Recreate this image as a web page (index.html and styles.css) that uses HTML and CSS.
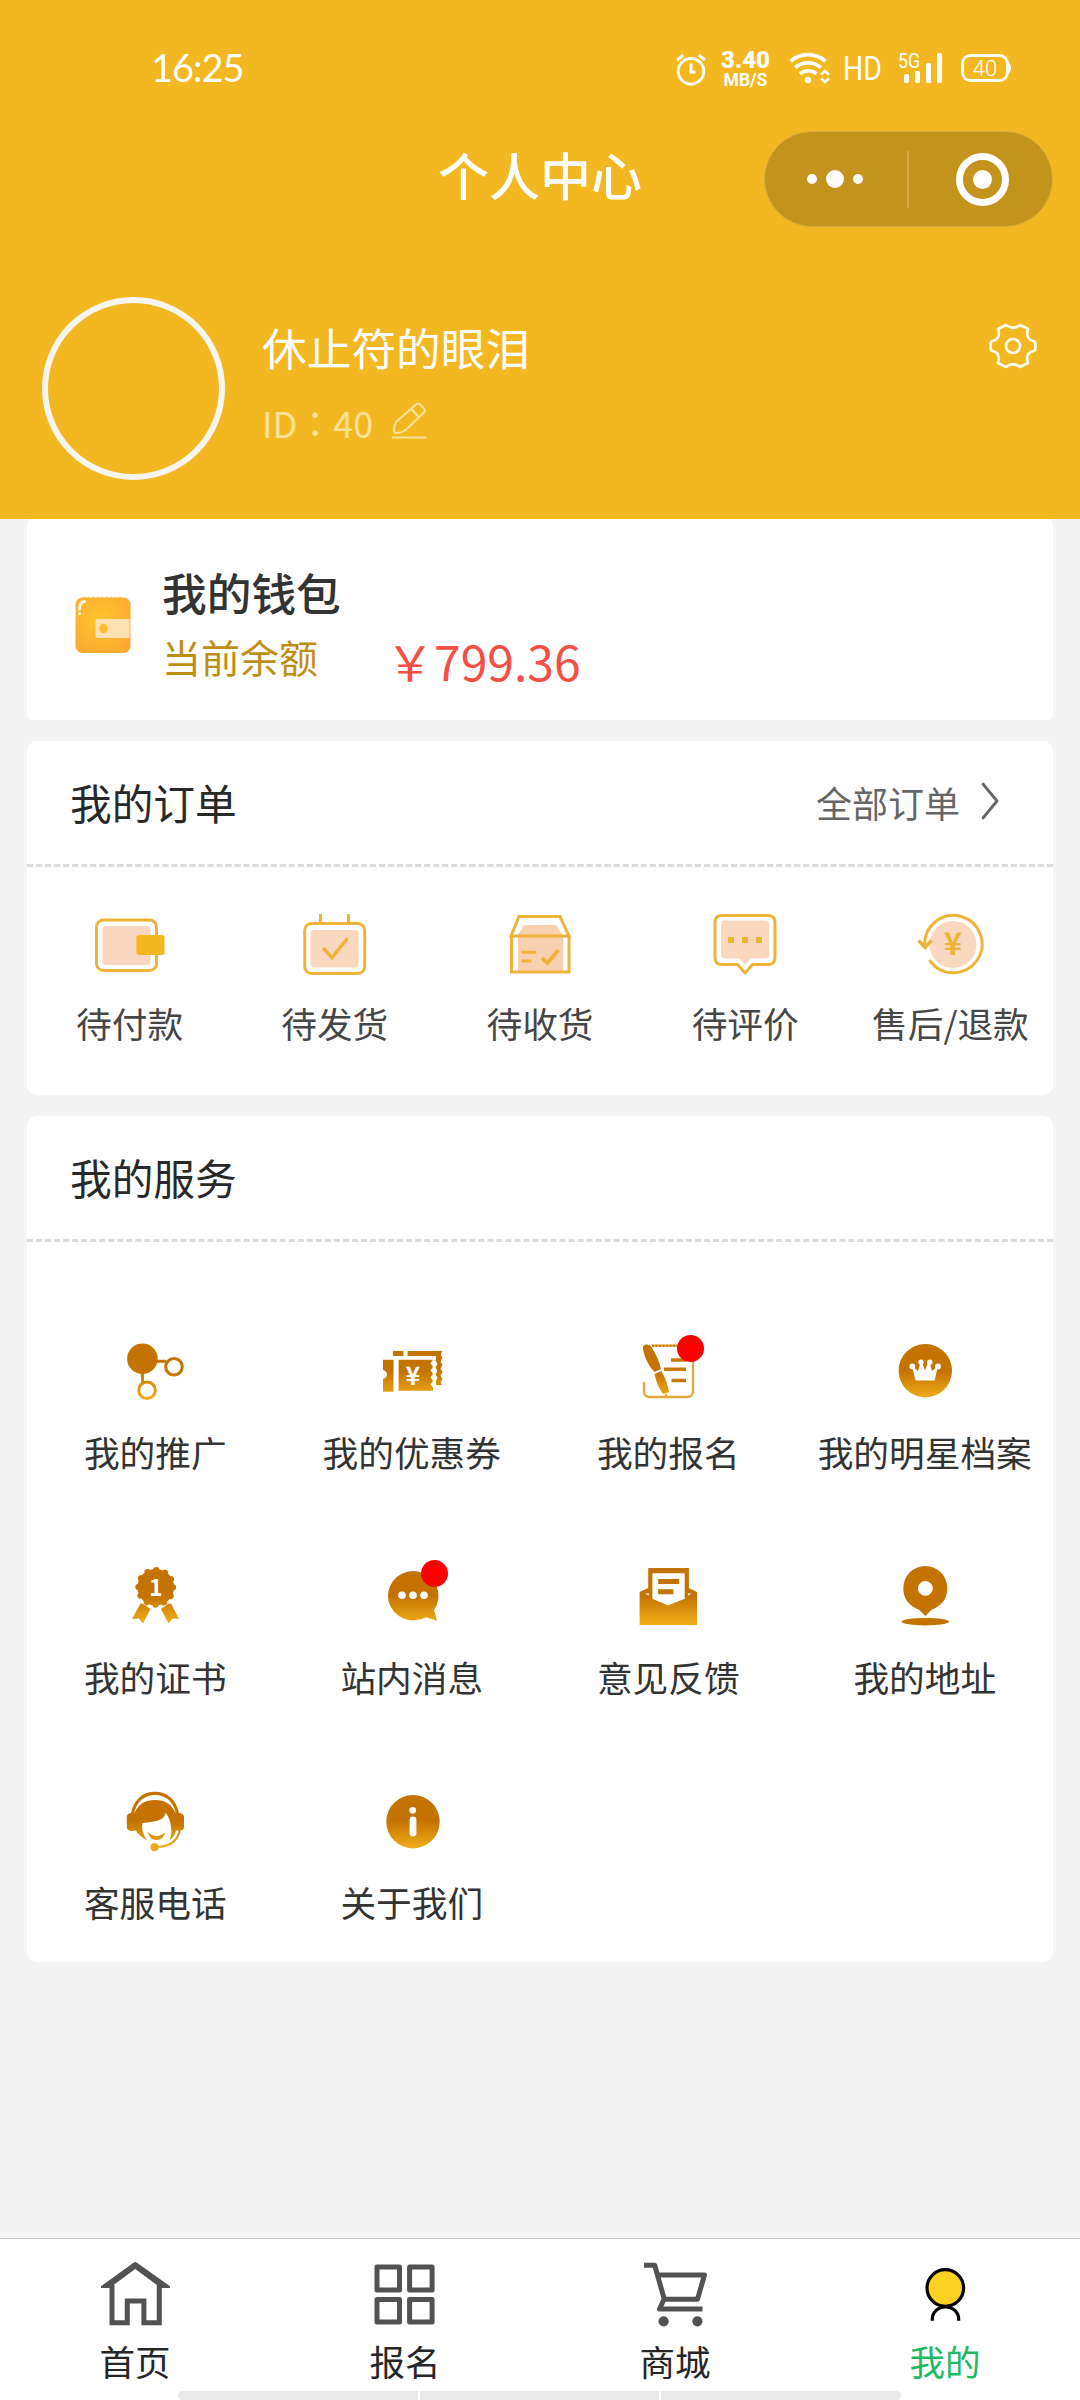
FILE: index.html
```html
<!DOCTYPE html>
<html lang="zh-CN">
<head>
<meta charset="utf-8">
<title>个人中心</title>
<link rel="stylesheet" href="styles.css">
</head>
<body>
<svg class="defs" width="0" height="0" aria-hidden="true">
  <defs>
    <linearGradient id="gold" gradientUnits="userSpaceOnUse" x1="0" y1="10" x2="0" y2="70">
      <stop offset="0" stop-color="#c57300"/>
      <stop offset=".52" stop-color="#c57300"/>
      <stop offset=".95" stop-color="#eeaa18"/>
    </linearGradient>
    <radialGradient id="purse" cx=".45" cy=".4" r=".7">
      <stop offset="0" stop-color="#fec62c"/>
      <stop offset="1" stop-color="#fda832"/>
    </radialGradient>
  </defs>
</svg>
<div class="page">
  <header class="hero">
    <div class="status">
      <time class="clock">16:25</time>
      <div class="indicators">
        <svg class="alarm" viewBox="0 0 30 44" fill="none" stroke="#fff"><circle cx="15" cy="25.3" r="12.8" stroke-width="2.8"/><path d="M15 17.5V26h4.5" stroke-width="3"/><path d="M1.2 14 7.3 9M28.8 14 22.700 9" stroke-width="3"/></svg>
        <div class="speed"><b>3.40</b><small>MB/S</small></div>
        <svg class="wifi" viewBox="0 0 42 44" fill="none" stroke="#fff" stroke-width="3.8"><path d="M2.500 15.200C13 6.500 27 6.500 37.500 15.200M7 21.600C14.500 15.200 25.500 15.200 33 21.600M12 27.800c5-4 11.500-4 16.500 0"/><circle cx="20" cy="34" r="3.200" fill="#fff" stroke="none"/><path d="m33 28.500 4-3.500 4 3.500M33 32.500l4 3.500 4-3.500" stroke-width="2.800"/></svg>
        <svg class="hd" viewBox="0 0 44 44"><text x="2" y="34" textLength="39" lengthAdjust="spacingAndGlyphs">HD</text></svg>
        <svg class="signal" viewBox="0 0 45 44" fill="#fff"><text x="0" y="22" textLength="22" lengthAdjust="spacingAndGlyphs">5G</text><rect x="6" y="28" width="5" height="9" rx="1.500"/><rect x="17" y="25" width="5" height="12" rx="1.500"/><rect x="28" y="17" width="5" height="20" rx="1.500"/><rect x="39" y="7" width="5" height="30" rx="1.500"/></svg>
        <svg class="battery" viewBox="0 0 52 44"><rect x="2.500" y="9.500" width="45" height="25" rx="8" fill="none" stroke="#fff" stroke-width="2.800"/><path d="M48 16q3 2 3 6t-3 6z" fill="#fff"/><text x="25" y="29.500" text-anchor="middle">40</text></svg>
      </div>
    </div>
    <div class="navbar">
      <h1>个人中心</h1>
      <div class="capsule">
        <span class="more"><i></i><i></i><i></i></span>
        <span class="close"><i></i></span>
      </div>
    </div>
    <div class="profile">
      <div class="avatar"></div>
      <div class="who">
        <div class="name">休止符的眼泪</div>
        <div class="uid"><span lang="zh-TW">ID：40</span>
          <svg viewBox="0 0 36 38" fill="none" stroke="currentColor" stroke-width="2" stroke-linecap="round" stroke-linejoin="round"><path d="M5 32q-2 0-2-3 0-5 2-8L25 3.500q2-2 4 0l4 4q1.500 2 0 4L14 29.500Q10 32 5 32zM20.500 8l7.500 8.500M1.500 36.500h33"/></svg>
        </div>
      </div>
      <svg class="gear" viewBox="-24 -24 48 48" fill="none" stroke="#fffdf0" stroke-width="2.700" stroke-linejoin="round"><circle r="7"/><path d="M-7-21Q0-15.500 7-21L15-17Q12-7 20.500-5Q22.300-4.500 22.300-2.500V2.500Q22.300 4.500 20.500 5Q12 7 15 17L7 21Q0 15.500-7 21L-15 17Q-12 7-20.500 5Q-22.300 4.500-22.300 2.500V-2.500Q-22.300-4.500-20.500-5Q-12-7-15-17Z"/></svg>
    </div>
  </header>

  <main>
    <section class="card wallet">
      <svg viewBox="0 0 56 58"><rect x=".5" y="1.500" width="55" height="55.500" rx="7" fill="url(#purse)"/><path d="M8 1.500h40" stroke="#fdc05c" stroke-width="1.500" stroke-dasharray="2 2.500"/><path d="M22 23h32.500v19H22q-1.500 0-1.500-2V25q0-2 1.500-2z" fill="#fee1b3"/><ellipse cx="28.500" cy="32.500" rx="4.200" ry="4.700" fill="#fdbb2e"/><path d="M4.500 13q0-7 5-7.500" fill="none" stroke="#fff6dc" stroke-width="3" stroke-linecap="round"/><circle cx="4.500" cy="17.500" r="1.500" fill="#fff6dc"/></svg>
      <div>
        <h2>我的钱包</h2>
        <p><span class="label">当前余额</span><span class="amount">￥799.36</span></p>
      </div>
    </section>

    <section class="card orders">
      <div class="head"><h3>我的订单</h3><a>全部订单<svg viewBox="0 0 20 40" fill="none" stroke="#666" stroke-width="2.800" stroke-linecap="round" stroke-linejoin="round"><path d="m3 3 14 17L3 37"/></svg></a></div>
      <div class="states">
        <div class="state"><svg viewBox="0 0 80 64" fill="none" stroke="#eeb43a" stroke-width="3"><rect x="6.500" y="7" width="60" height="50.500" rx="7"/><rect x="12.500" y="13" width="48" height="39" rx="4" fill="#fad7bf" stroke="none"/><rect x="46.500" y="22" width="28" height="20" rx="2.500" fill="#f3b721" stroke="none"/></svg><span>待付款</span></div>
        <div class="state"><svg viewBox="0 0 80 64" fill="none" stroke="#eeb43a" stroke-width="3"><path d="M25.500 1v11M53.500 1v11"/><rect x="9.700" y="10.500" width="60" height="50" rx="7"/><rect x="15.500" y="17" width="48" height="37.500" rx="4" fill="#fad7bf" stroke="none"/><path d="m29 36 8 8.500 14.500-18" stroke-width="3.500" stroke-linecap="round"/></svg><span>待发货</span></div>
        <div class="state"><svg viewBox="0 0 80 64" fill="none" stroke="#eeb43a" stroke-width="3"><path d="M24 12h32l7 11.500V60H17V23z" fill="#f9d1b1" stroke="none"/><path d="M16.500 25v33M64.500 25v33" stroke="#fff"/><path d="M19 3.500h41l9 19.500H11zM11.500 23h57.500v36H11.500z"/><path d="M21.500 39.200h14.500M21.500 48h10"/><path d="m42 45 5.500 5L58.500 37" stroke-width="4"/></svg><span>待收货</span></div>
        <div class="state"><svg viewBox="0 0 80 64" fill="none" stroke="#eeb43a" stroke-width="3"><path d="M17 2.500h46q7 0 7 7v35q0 7-7 7H47.500l-7.500 8.500L32.500 51.500H17q-7 0-7-7v-35q0-7 7-7z" stroke-linejoin="round"/><path d="M20 7.500h40q4 0 4 4v31q0 3-4 3H46l-6 6-6-6H20q-4 0-4-3v-31q0-4 4-4z" fill="#fad7bf" stroke="none"/><path d="M23 27h6M37 27h6M51 27h6" stroke-width="6"/></svg><span>待评价</span></div>
        <div class="state"><svg viewBox="0 0 80 64" fill="none" stroke="#eeb43a" stroke-width="3"><circle cx="43" cy="31.500" r="23.500" fill="#fad7bf" stroke="none"/><path d="M19.500 47A28.700 28.700 0 1 0 14.800 33.500"/><path d="m8.500 27.500 6.500 7 6.500-7" stroke-width="3.500"/><text x="43" y="42" text-anchor="middle">¥</text></svg><span>售后/退款</span></div>
      </div>
    </section>

    <section class="card services">
      <div class="head"><h3>我的服务</h3></div>
      <div class="grid">
        <div class="item"><div class="ico"><svg viewBox="0 0 80 80"><circle cx="27.400" cy="28.700" r="15.300" fill="url(#gold)"/><g fill="none" stroke="url(#gold)" stroke-width="3"><circle cx="59" cy="36.700" r="8.300"/><circle cx="32" cy="60.300" r="8.300"/><path d="M41 31.200l10 .1M27.400 42l.1 12"/></g></svg></div><span>我的推广</span></div>
        <div class="item"><div class="ico"><svg viewBox="0 0 80 80" fill="url(#gold)"><path d="M11 29.700h10.500v32H11V49q4-1 4-4.500T11 40zM26.600 29.700H61l-2.500 3.500 2.500 3.500-2.500 3.500 2.500 3.500-2.500 3.500 2.500 3.500-2.500 3.500 2.500 3.500v3H26.600zM20.900 21h10.600v5H20.900zM35.600 21h34.900l-2 3.500 2 3.500-2 3.500 2 3.500-2 3.500 2 3.500-2 3.500 2 3.500-2 3.500 1.800 2.500H64v-4l1.500-3-2-3.500 2-3.500-2-3.500 2-3.500-2-3.500.5-2.500V26H35.600z"/><text x="41" y="54.500" text-anchor="middle" class="yen">¥</text></svg></div><span>我的优惠券</span></div>
        <div class="item"><div class="ico"><svg viewBox="0 0 80 80"><path d="M24 15.700h35q6 0 6 6V61q0 6-6 6H22q-6 0-6-6v-9" fill="none" stroke="#e5a83c" stroke-width="2.300"/><path d="M24 15.700h35" stroke="#c57300" stroke-width="2" stroke-dasharray="2 1.500"/><path d="M15 19q-.5-4 3-4.500 4-.5 5.500 2.500 7 11 9.500 22l-6.500 3Q17 32 15 19zM26.500 44l7-3q6 11 7.500 21l-2 1-4 1Q29 56 26.500 44zM36 65l3-1v3z" fill="url(#gold)"/><path d="M43 30h15M36 39.200h22M43.500 50.500h14.500" stroke="#c67808" stroke-width="3.600"/></svg><i class="dot"></i></div><span>我的报名</span></div>
        <div class="item"><div class="ico"><svg viewBox="0 0 80 80"><circle cx="40.300" cy="40.700" r="26.700" fill="url(#gold)"/><g fill="#fff"><path d="m27 36 6 5 2.500-8.500h1.500l3 8 3-8h1.500L47 41l6-5-3.500 14.500h-19z"/><circle cx="27.300" cy="36.500" r="2.900"/><circle cx="36" cy="32.300" r="2.700"/><circle cx="44.800" cy="32.300" r="2.700"/><circle cx="53" cy="36.500" r="2.900"/></g></svg></div><span>我的明星档案</span></div>
        <div class="item"><div class="ico"><svg viewBox="0 0 80 80" fill="url(#gold)"><circle cx="40.700" cy="32.300" r="18.300"/><circle cx="40.700" cy="32.300" r="17.500" fill="none" stroke="url(#gold)" stroke-width="5.800" stroke-dasharray=".1 9.063" stroke-linecap="round"/><path d="m25.500 48.500 3 .5 7 5-7.500 14.500-4-5-7 .5zM56 48.500l-3 .5-7 5L53.500 68.500l4-5 6.500.5z"/><text x="40.700" y="40.500" text-anchor="middle" class="one">1</text></svg></div><span>我的证书</span></div>
        <div class="item"><div class="ico"><svg viewBox="0 0 80 80" fill="url(#gold)"><path d="M41 16a25.500 24.700 0 0 1 25.500 24.700q0 8-4.500 14l3 11-11-3.500A25.500 24.700 0 1 1 41 16z"/><g fill="#fff"><circle cx="30" cy="40.300" r="3.800"/><circle cx="41" cy="40.300" r="3.800"/><circle cx="52" cy="40.300" r="3.800"/></g></svg><i class="dot"></i></div><span>站内消息</span></div>
        <div class="item"><div class="ico"><svg viewBox="0 0 80 80" fill="url(#gold)"><path d="M20.200 13h40.700v20l8.100 4v33H11.600V37l8.600-4z"/><path d="M24.400 18.300h32.300v25.500L40 50.500l-15.600-6.700zM17 38.500h4v2zM60 38.500h4l-4 2z" fill="#fff"/><path d="M30.200 24h21v5h-21zM30.200 34.200h15.200v5H30.200z"/></svg></div><span>意见反馈</span></div>
        <div class="item"><div class="ico"><svg viewBox="0 0 80 80" fill="#c57300"><path fill-rule="evenodd" d="M40.300 11a22 22 0 0 1 22 22.500q0 15-16 21.500l-6 6-6-6q-16-6.500-16-21.500a22 22 0 0 1 22-22.500zm0 15a7.400 7.400 0 1 0 .1 0z"/><ellipse cx="40.300" cy="66.700" rx="23.800" ry="3.700"/></svg></div><span>我的地址</span></div>
        <div class="item"><div class="ico"><svg viewBox="0 0 80 80" fill="url(#gold)"><path d="M17.500 34C20 20 29 13.300 40 13.300S60 20 62.500 34" fill="none" stroke="url(#gold)" stroke-width="3.200"/><path d="M19.500 33Q25 20 40 20t20.500 13h4.500q4 1 4 4v10q0 4-5 3.500L61 50.500q-1 6-7 10 3.500-6 2-13.500-.5-8-5.500-14.500-.5 5-6 7.500-6 2-17 3-2 8 4.500 17.500Q23 55 21 50.500l-4 .5q-5 0-5.200-4V37q0-3.500 4-4z"/><path d="M35 55q6 4 13 0-2 4-6.500 4T35 55zM65 49Q62 67 41 67" fill="none" stroke="url(#gold)" stroke-width="2"/><circle cx="39.500" cy="67.300" r="4"/></svg></div><span>客服电话</span></div>
        <div class="item"><div class="ico"><svg viewBox="0 0 80 80"><circle cx="41" cy="41.700" r="26.700" fill="url(#gold)"/><circle cx="40.700" cy="30.300" r="3.400" fill="#fff"/><path d="M41 40v13" stroke="#fff" stroke-width="6.800" stroke-linecap="round"/></svg></div><span>关于我们</span></div>
      </div>
    </section>
  </main>

  <nav class="tabs">
    <div class="tab"><svg viewBox="0 0 80 80" fill="none" stroke="#525252" stroke-width="5"><path d="M17 31v37.800h15.300V46.900h16.600v21.900h15.400V31"/><path d="M6 32.300 38.600 8.700q1.700-1.200 3.400 0L75 32.300V34h-9L40.200 15 14.500 34H6z" fill="#525252" stroke="none"/></svg><span>首页</span></div>
    <div class="tab"><svg viewBox="0 0 80 80" fill="none" stroke="#525252" stroke-width="5"><path d="M12 12.900h22.500v23H12zM44.600 12.900h22.500v23H44.600zM12 45.500h22.500V68H12zM44.600 45.500h22.500V68H44.600z" stroke-linejoin="round"/></svg><span>报名</span></div>
    <div class="tab"><svg viewBox="0 0 80 80" fill="none" stroke="#525252" stroke-width="5"><path d="M9 11.300h10.700L29.500 46M23 21h46.500L62.500 45.300H29L24.500 55h43" stroke-linejoin="round"/><g fill="#525252" stroke="none"><circle cx="28.600" cy="67.300" r="5.100"/><circle cx="62.400" cy="67.300" r="5.100"/></g></svg><span>商城</span></div>
    <div class="tab active"><svg viewBox="0 0 80 80" fill="none" stroke="#000" stroke-width="3.200"><circle cx="40.300" cy="34" r="18.300" fill="#fdd022"/><path d="M27.300 66.700V65a13.200 12.200 0 0 1 26.400 0v1.700"/></svg><span>我的</span></div>
    <div class="handle"><i></i><i></i><i></i></div>
  </nav>
</div>
</body>
</html>
```
FILE: styles.css
```css
* { box-sizing: border-box; }
body, h1, h2, h3, p { margin: 0; }
body { font-family: "Noto Sans CJK SC", sans-serif; font-weight: 400; color: #333; background: #f4f4f4; }
h1, h2, h3 { font-weight: inherit; }
i { font-style: normal; }
svg { display: block; flex: none; }
.defs { position: absolute; }
.page { width: 1080px; height: 2400px; display: flex; flex-direction: column; overflow: hidden; }

/* header */
.hero { height: 519px; background: #f3b721; color: #fff; flex: none; }
.status { height: 131px; padding: 46px 68px 0 151px; display: flex; justify-content: space-between; align-items: flex-start; }
.clock { font: 38px/43px Lato, sans-serif; letter-spacing: -1px; }
.indicators { display: flex; height: 44px; }
.indicators svg { height: 44px; }
.indicators text { fill: #fff; font-family: Roboto, sans-serif; }
.alarm { width: 30px; }
.speed { width: 49px; margin-left: 15px; display: flex; flex-direction: column; align-items: center; font-family: Roboto, sans-serif; font-weight: 700; white-space: nowrap; padding-top: 3px; }
.speed b { font-size: 24px; line-height: 22px; }
.speed small { font-size: 17.500px; line-height: 18px; }
.wifi { width: 42px; margin-left: 18px; }
.hd { width: 44px; margin-left: 11px; }
.hd text { font-size: 33px; }
.signal { width: 45px; margin-left: 13px; }
.signal text { font-size: 20px; }
.battery { width: 52px; margin-left: 17px; }
.battery text { font-size: 22px; font-weight: 300; }

.navbar { height: 96px; padding-right: 27px; display: grid; grid-template-columns: 438px 1fr 289px; }
.navbar h1 { grid-column: 2; font-size: 51px; font-weight: 500; line-height: 86px; }
.capsule { height: 96px; border-radius: 48px; background: #c3931b; border: 1.500px solid #d8ab42; display: grid; grid-template-columns: 1fr 1fr; align-items: center; }
.more { height: 57px; padding-right: 2px; border-right: 2px solid #d3a847; display: flex; align-items: center; justify-content: center; gap: 9px; }
.more i { width: 10px; height: 10px; border-radius: 50%; background: #fff; }
.more i:nth-child(2) { width: 18px; height: 18px; }
.close { width: 53px; height: 53px; margin-left: 47px; border: 7px solid #fff; border-radius: 50%; display: grid; place-items: center; }
.close i { width: 19px; height: 19px; border-radius: 50%; background: #fff; }

.profile { padding: 70px 43px 0 42px; display: flex; align-items: flex-start; }
.avatar { width: 183px; height: 183px; border: 6px solid #f7f5f0; border-radius: 50%; }
.who { margin-left: 37px; padding-top: 20px; flex: 1; }
.name { font-size: 44.700px; line-height: 60px; }
.uid { margin-top: 15px; display: flex; align-items: center; color: #fbe19a; font-size: 36px; line-height: 60px; }
.uid span { font-family: "Noto Sans CJK TC", sans-serif; }
.uid svg { width: 36px; height: 38px; margin: -5px 0 0 18px; }
.gear { width: 48px; height: 48px; margin-top: 25px; }

/* cards */
main { flex: 1; padding: 0 27px; }
.card { background: #fff; border-radius: 10px; }
.wallet { height: 201px; border-radius: 6px; padding: 43px 0 0 48px; display: flex; }
.wallet svg { width: 56px; height: 58px; margin: 34px 31px 0 0; }
.wallet h2 { font-size: 44.700px; font-weight: 500; line-height: 60px; }
.wallet p { display: flex; }
.label { color: #bf8e16; font-size: 39px; line-height: 68px; width: 224px; }
.amount { color: #f54f45; font-size: 48px; line-height: 77px; }
.orders { height: 354px; margin-top: 21px; }
.head { height: 126px; padding: 0 52px 2px 43px; border-bottom: 3px dashed #dcdcdc; display: flex; justify-content: space-between; align-items: center; line-height: 60px; color: #282828; }
.head h3 { font-size: 41.700px; }
.head a { display: flex; align-items: center; font-size: 36px; color: #666; }
.head a svg { width: 20px; height: 40px; margin: -2px 1px 0 20px; }
.states { display: grid; grid-template-columns: repeat(5, 1fr); padding-top: 46px; }
.state { display: flex; flex-direction: column; align-items: center; font-size: 35.700px; line-height: 54px; color: #464646; white-space: nowrap; }
.state svg { width: 80px; height: 64px; margin-bottom: 19px; }
.state text { fill: #eeb43a; stroke: none; font: 700 31px "Noto Sans CJK SC", sans-serif; }

.services { height: 846px; margin-top: 21px; }
.grid { display: grid; grid-template-columns: repeat(4, 1fr); grid-auto-rows: 225px; padding-top: 88px; }
.item { display: flex; flex-direction: column; align-items: center; font-size: 35.700px; line-height: 54px; white-space: nowrap; }
.ico { position: relative; width: 80px; height: 80px; margin-bottom: 15px; }
.ico svg { width: 80px; height: 80px; }
.ico text { fill: #fff; font: 700 25px "Noto Sans CJK SC", sans-serif; }
.ico .one { font-size: 23px; }
.dot { position: absolute; left: 49px; top: 5px; width: 27px; height: 27px; border-radius: 50%; background: #f00; }

/* tab bar */
.tabs { position: relative; height: 162px; flex: none; background: #fff; border-top: 1px solid #c6c6c6; display: grid; grid-template-columns: repeat(4, 1fr); }
.tab { display: flex; flex-direction: column; align-items: center; padding-top: 15px; font-size: 35.500px; line-height: 54px; color: #262626; }
.tab svg { width: 80px; height: 80px; }
.active { color: #1cba62; }
.handle { position: absolute; left: 178px; bottom: 0; width: 723px; height: 9px; border-radius: 5px; overflow: hidden; display: flex; gap: 2px; }
.handle i { flex: 1; background: #e9e9e9; }
```
